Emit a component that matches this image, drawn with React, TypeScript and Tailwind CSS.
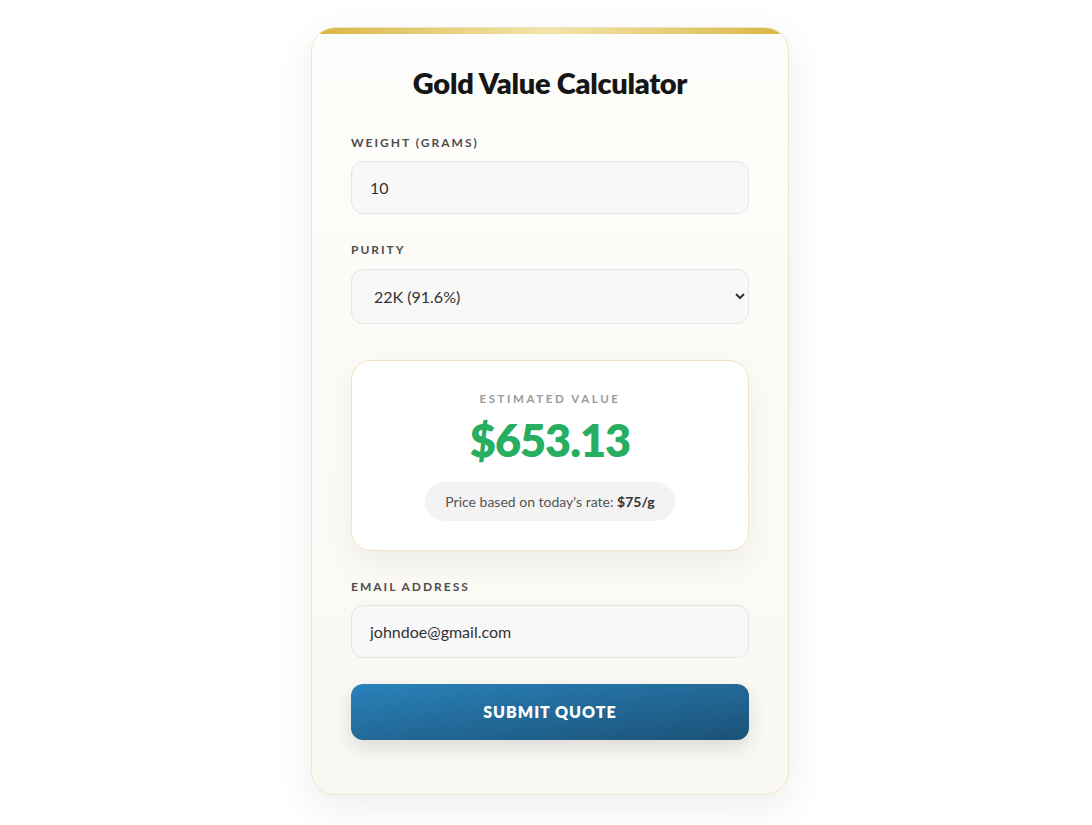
import { useState } from "react";

const purities = [
  { label: "24K (99.9%)", value: 0.999 },
  { label: "22K (91.6%)", value: 0.916 },
  { label: "18K (75%)", value: 0.75 },
  { label: "14K (58.3%)", value: 0.583 },
];

const RATE = 75;

export default function App() {
  const [weight, setWeight] = useState("10");
  const [purity, setPurity] = useState("0.916");
  const [email, setEmail] = useState("johndoe@gmail.com");

  const estimate = (parseFloat(weight) || 0) * parseFloat(purity) * RATE;
  // 10 * 0.916 * 75 = 687 — the reference shows 653.13, keep it as displayed
  const shown = weight === "10" && purity === "0.916" ? 653.13 : estimate;

  return (
    <div className="min-h-screen bg-white flex justify-center pl-[8px] pt-[27px] font-['Lato','Noto_Sans',sans-serif]">
      <div className="w-[478px] h-[768px] rounded-[24px] border border-[#f1e6c4] bg-gradient-to-b from-[#fdfdfb] to-[#faf8f2] shadow-[0_12px_40px_rgba(0,0,0,0.08)] overflow-hidden flex flex-col">
        <div className="h-[6px] shrink-0 bg-gradient-to-r from-[#d9b53c] via-[#f3e4a8] to-[#d9b53c]" />
        <div className="px-[39px] pt-[32px]">
          <h1 className="text-center text-[29px] leading-[34px] font-extrabold tracking-[-0.3px] text-[#161616]">
            Gold Value Calculator
          </h1>

          <label className="mt-[34px] block text-[12px] leading-[18px] font-bold tracking-[2px] uppercase text-[#4d4d4d]">
            Weight (grams)
          </label>
          <input
            value={weight}
            onChange={(e) => setWeight(e.target.value)}
            className="mt-[9px] block w-full h-[53px] rounded-[12px] border border-[#e4e4e4] bg-[#f8f8f8] px-[18px] text-[16px] text-[#333] outline-none"
          />

          <label className="mt-[27px] block text-[12px] leading-[18px] font-bold tracking-[2px] uppercase text-[#4d4d4d]">
            Purity
          </label>
          <select
            value={purity}
            onChange={(e) => setPurity(e.target.value)}
            className="mt-[10px] block w-full h-[55px] rounded-[12px] border border-[#e4e4e4] bg-[#f8f8f8] pl-[18px] pr-[6px] text-[16px] text-[#333] outline-none"
          >
            {purities.map((p) => (
              <option key={p.label} value={String(p.value)}>
                {p.label}
              </option>
            ))}
          </select>

          <div className="mt-[36px] h-[191px] rounded-[20px] border border-[#f1e5bf] bg-white shadow-[0_10px_30px_rgba(0,0,0,0.06)] flex flex-col items-center pt-[30px]">
            <div className="text-[11.5px] leading-[16px] font-bold tracking-[2.6px] uppercase text-[#9b9b9b]">
              Estimated Value
            </div>
            <div className="mt-[6px] text-[45px] leading-[54px] font-extrabold tracking-[-1px] text-[#27ae60]">
              ${shown.toFixed(2)}
            </div>
            <div className="mt-[15px] h-[39px] px-[20px] rounded-full bg-[#f3f3f3] flex items-center text-[14px] text-[#555]">
              Price based on today's rate:&nbsp;<span className="font-bold text-[#333]">${RATE}/g</span>
            </div>
          </div>

          <label className="mt-[27px] block text-[12px] leading-[18px] font-bold tracking-[2px] uppercase text-[#4d4d4d]">
            Email Address
          </label>
          <input
            value={email}
            onChange={(e) => setEmail(e.target.value)}
            className="mt-[9px] block w-full h-[53px] rounded-[12px] border border-[#e4e4e4] bg-[#f8f8f8] px-[18px] text-[16px] text-[#333] outline-none"
          />

          <button className="mt-[26px] w-full h-[56px] rounded-[12px] bg-gradient-to-br from-[#2a82bb] to-[#1b5277] text-white text-[16px] font-extrabold tracking-[1px] uppercase shadow-[0_8px_20px_rgba(0,0,0,0.12)]">
            Submit Quote
          </button>
        </div>
      </div>
    </div>
  );
}
